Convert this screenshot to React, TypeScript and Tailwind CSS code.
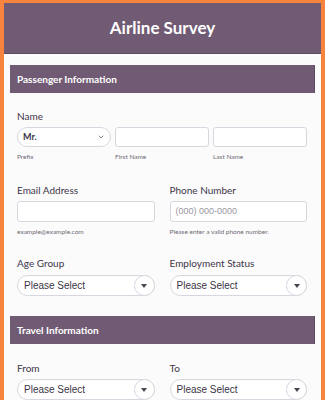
import { ChevronDown } from "lucide-react";

const Label = ({ children }: { children: React.ReactNode }) => (
  <div className="text-[10px] leading-[12px] text-[#3d3548] font-['Lato',sans-serif]">
    {children}
  </div>
);

const Sub = ({ children }: { children: React.ReactNode }) => (
  <div className="text-[6.5px] leading-[8px] text-[#6f6a75] font-['Lato',sans-serif] mt-[6px]">
    {children}
  </div>
);

const SelectPill = () => (
  <div className="flex items-center h-[21px] rounded-full border border-[#d8d6df] bg-white">
    <span className="flex-1 pl-[6px] text-[10px] text-[#3b3545] font-['Liberation_Sans',sans-serif]">
      Please Select
    </span>
    <span className="flex items-center justify-center w-[21px] h-[21px] rounded-full border border-[#d8d6df] bg-white -mr-px">
      <svg width="6" height="4" viewBox="0 0 6 4">
        <path d="M0 0h6L3 4z" fill="#4a4452" />
      </svg>
    </span>
  </div>
);

const Section = ({ title }: { title: string }) => (
  <div className="h-[28px] bg-[#715b74] border-r border-[#5c4a5f] flex items-center px-[7px] text-white text-[10px] font-bold font-['Lato',sans-serif]">
    {title}
  </div>
);

export default function App() {
  return (
    <div className="w-[325px] h-[400px] bg-[#f7843e] pt-[3px] px-[4px] overflow-hidden">
      <div className="h-[51px] bg-[#715b74] flex items-center justify-center border-b border-[#5f4d62]">
        <h1 className="text-white text-[17px] font-bold font-['Lato',sans-serif]">
          Airline Survey
        </h1>
      </div>
      <div className="bg-[#fbfbfc] h-[400px] px-[6px] pt-[11px]">
        <Section title="Passenger Information" />
        <div className="pl-[7px] pr-[8px]">
          <div className="mt-[17px]">
            <Label>Name</Label>
            <div className="grid grid-cols-3 gap-[4px] mt-[5px]">
              <div>
                <div className="flex items-center h-[20px] rounded-full border border-[#d8d6df] bg-white px-[5px]">
                  <span className="flex-1 text-[9px] font-bold text-[#3b3545] font-['Lato',sans-serif]">
                    Mr.
                  </span>
                  <ChevronDown size={8} strokeWidth={2} color="#4a4452" />
                </div>
                <Sub>Prefix</Sub>
              </div>
              <div>
                <div className="h-[20px] rounded-[3px] border border-[#d8d6df] bg-white" />
                <Sub>First Name</Sub>
              </div>
              <div>
                <div className="h-[20px] rounded-[3px] border border-[#d8d6df] bg-white" />
                <Sub>Last Name</Sub>
              </div>
            </div>
          </div>

          <div className="grid grid-cols-2 gap-[15px] mt-[23px]">
            <div>
              <Label>Email Address</Label>
              <div className="h-[21px] mt-[5px] rounded-[3px] border border-[#d8d6df] bg-white" />
              <Sub>example@example.com</Sub>
            </div>
            <div>
              <Label>Phone Number</Label>
              <div className="h-[21px] mt-[5px] rounded-[3px] border border-[#d8d6df] bg-white flex items-center px-[5px] text-[9px] text-[#9a96a0] font-['Liberation_Sans',sans-serif]">
                (000) 000-0000
              </div>
              <Sub>Please enter a valid phone number.</Sub>
            </div>
          </div>

          <div className="grid grid-cols-2 gap-[15px] mt-[21px]">
            <div>
              <Label>Age Group</Label>
              <div className="mt-[6px]">
                <SelectPill />
              </div>
            </div>
            <div>
              <Label>Employment Status</Label>
              <div className="mt-[6px]">
                <SelectPill />
              </div>
            </div>
          </div>
        </div>

        <div className="mt-[20px]">
          <Section title="Travel Information" />
        </div>
        <div className="pl-[7px] pr-[8px]">
          <div className="grid grid-cols-2 gap-[15px] mt-[18px]">
            <div>
              <Label>From</Label>
              <div className="mt-[5px]">
                <SelectPill />
              </div>
            </div>
            <div>
              <Label>To</Label>
              <div className="mt-[5px]">
                <SelectPill />
              </div>
            </div>
          </div>
        </div>
      </div>
    </div>
  );
}
